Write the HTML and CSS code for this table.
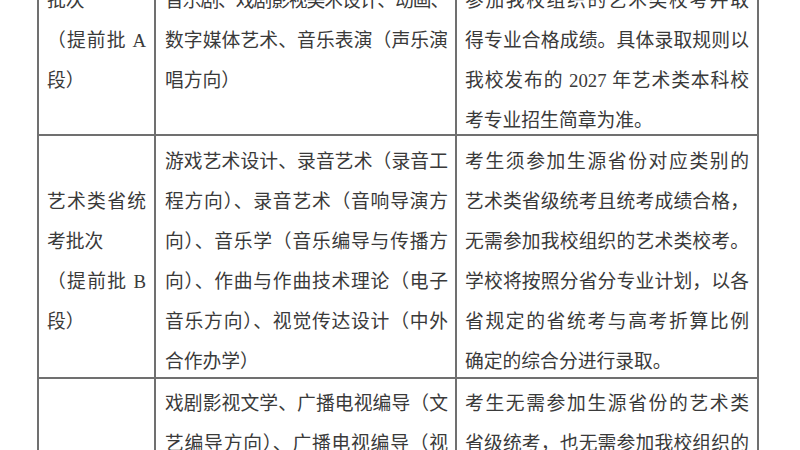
FILE: index.html
```html
<!DOCTYPE html>
<html lang="zh-CN">
<head>
<meta charset="utf-8">
<title>艺术类招生批次</title>
<link rel="stylesheet" href="styles.css">
</head>
<body>
<div class="sheet">
  <div class="cell c1 r1">
    <span class="ln">批次</span>
    <span class="ln j">（提前批 A</span>
    <span class="ln">段）</span>
  </div>
  <div class="cell c2 r1">
    <span class="ln j tight">音乐剧、戏剧影视美术设计、动画、</span>
    <span class="ln j">数字媒体艺术、音乐表演（声乐演</span>
    <span class="ln">唱方向）</span>
  </div>
  <div class="cell c3 r1">
    <span class="ln j">参加我校组织的艺术类校考并取</span>
    <span class="ln j">得专业合格成绩。具体录取规则以</span>
    <span class="ln j">我校发布的 2027 年艺术类本科校</span>
    <span class="ln">考专业招生简章为准。</span>
  </div>

  <div class="cell c1 r2 mid">
    <span class="ln j">艺术类省统</span>
    <span class="ln">考批次</span>
    <span class="ln j">（提前批 B</span>
    <span class="ln">段）</span>
  </div>
  <div class="cell c2 r2">
    <span class="ln j">游戏艺术设计、录音艺术（录音工</span>
    <span class="ln j">程方向）、录音艺术（音响导演方</span>
    <span class="ln j">向）、音乐学（音乐编导与传播方</span>
    <span class="ln j">向）、作曲与作曲技术理论（电子</span>
    <span class="ln j">音乐方向）、视觉传达设计（中外</span>
    <span class="ln">合作办学）</span>
  </div>
  <div class="cell c3 r2">
    <span class="ln j">考生须参加生源省份对应类别的</span>
    <span class="ln j">艺术类省级统考且统考成绩合格，</span>
    <span class="ln j">无需参加我校组织的艺术类校考。</span>
    <span class="ln j">学校将按照分省分专业计划，以各</span>
    <span class="ln j">省规定的省统考与高考折算比例</span>
    <span class="ln">确定的综合分进行录取。</span>
  </div>

  <div class="cell c1 r3"></div>
  <div class="cell c2 r3">
    <span class="ln j">戏剧影视文学、广播电视编导（文</span>
    <span class="ln j">艺编导方向）、广播电视编导（视</span>
  </div>
  <div class="cell c3 r3">
    <span class="ln j">考生无需参加生源省份的艺术类</span>
    <span class="ln j">省级统考，也无需参加我校组织的</span>
  </div>
</div>
</body>
</html>
```

FILE: styles.css
```css
html, body {
  margin: 0;
  padding: 0;
  background: #ffffff;
  overflow: hidden;
}

body {
  width: 800px;
  height: 450px;
  font-family: "Liberation Serif", "Noto Sans CJK SC", serif;
  font-size: 18.8px;
  line-height: 40px;
  color: #3a3a3a;
}

.sheet {
  display: grid;
  grid-template-columns: 115px 299px 300px;
  grid-template-rows: 160px 241px 200px;
  gap: 2px;
  padding: 2px;
  width: max-content;
  margin: -28px 0 0 37px;
  background: #707070;
}

.cell {
  background: #ffffff;
  padding: 6px 8px 0 8px;
  overflow: visible;
}

.c2 {
  padding-left: 9px;
  padding-right: 7px;
}

.r1 {
  padding-top: 7px;
}

.r2 {
  padding-top: 6px;
}

.r2.mid {
  padding-top: 46px;
}

.r3 {
  padding-top: 5px;
}

.ln {
  display: block;
  white-space: nowrap;
  text-align: left;
}

.ln.j {
  text-align: justify;
  text-align-last: justify;
}

.ln.tight {
  letter-spacing: -1.2px;
}
```
